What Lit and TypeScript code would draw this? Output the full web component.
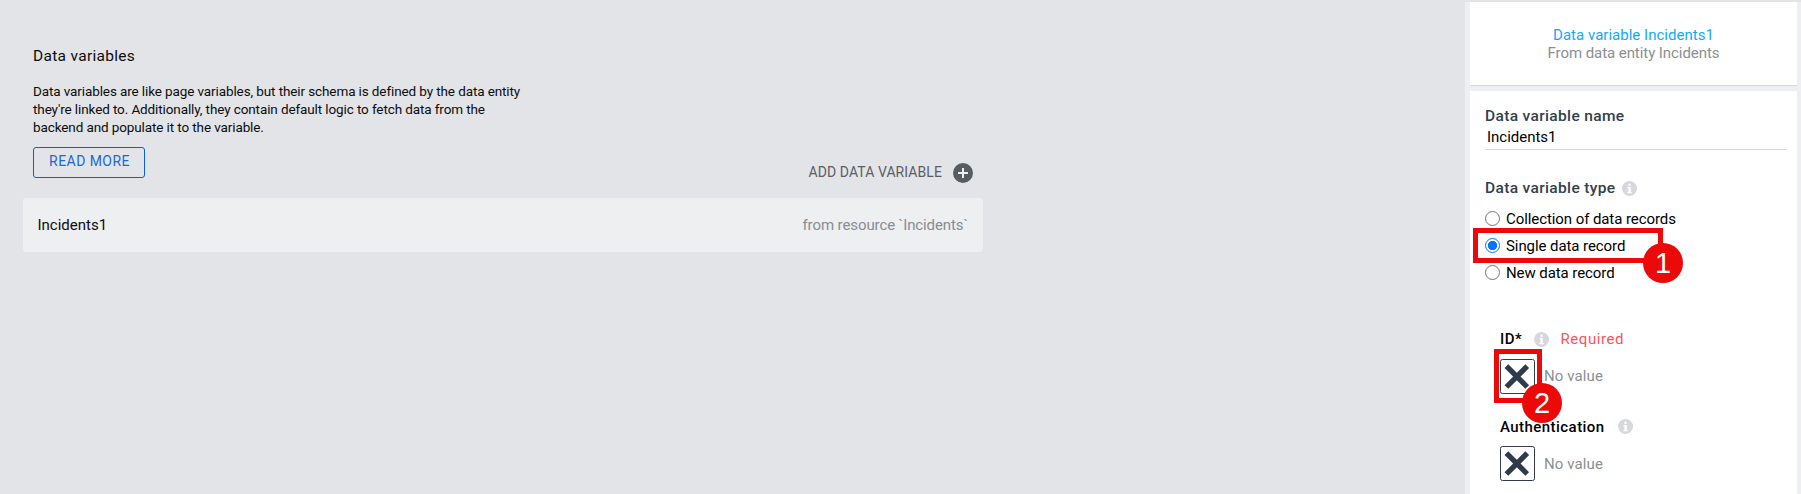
import { LitElement, html, css } from 'lit';
import { customElement, property } from 'lit/decorators.js';

@customElement('info-icon')
class InfoIcon extends LitElement {
  static styles = css`
    :host { display: block; width: 15px; height: 15px; }
    svg { display: block; }
  `;
  render() {
    return html`<svg width="15" height="15" viewBox="0 0 15 15">
      <circle cx="7.5" cy="7.5" r="7.5" fill="#d7d8dc" />
      <path d="M6.3 2.8h2.4v2H6.3zM5.5 6h3.3v5h.9v1.2H5.4V11h1V7.2h-.9z" fill="#fff" />
    </svg>`;
  }
}

@customElement('value-picker')
class ValuePicker extends LitElement {
  static styles = css`
    :host { display: flex; align-items: flex-start; gap: 9px; height: 35px; }
    .box { box-sizing: border-box; width: 35px; height: 35px; border: 1px solid #323c4b; border-radius: 2.5px; background: #fff; }
    svg { display: block; }
    .text { color: #8b8f94; font-size: 15px; line-height: 18px; letter-spacing: .1px; margin-top: var(--text-top, 9px); }
  `;
  render() {
    return html`<div class="box"><svg width="33" height="33" viewBox="0 0 33 33">
        <path d="M5.4 6.2L26.2 27M26.2 6.2L5.4 27" stroke="#2f3a4a" stroke-width="5.3" />
      </svg></div><span class="text">No value</span>`;
  }
}

@customElement('step-mark')
class StepMark extends LitElement {
  @property() step = '';
  static styles = css`
    :host { position: absolute; box-sizing: border-box; border: 5px solid #eb0909; pointer-events: none; z-index: 2; }
    .num {
      position: absolute; right: -25px; bottom: -25px; width: 40px; height: 40px; border-radius: 50%;
      background: #eb0909; color: #fff; text-align: center; font: 29px/41px "Liberation Sans", sans-serif;
    }
  `;
  render() {
    return html`<span class="num">${this.step}</span>`;
  }
}

@customElement('app-root')
class AppRoot extends LitElement {
  static styles = css`
    :host {
      display: flex; height: 494px; overflow: hidden; background: #e3e4e8; color: #0b0c0e;
      font: 15px/18px Roboto, "Liberation Sans", sans-serif;
    }
    .main { flex: 1; padding: 47px 0 0 23px; }
    .content { width: 960px; }
    .head { display: flex; justify-content: space-between; align-items: flex-end; padding: 0 10px; margin-bottom: 15px; }
    .title { font-size: 15.5px; letter-spacing: .3px; margin-bottom: 17px; }
    .desc { font-size: 13.5px; letter-spacing: -.11px; white-space: nowrap; margin-bottom: 11px; }
    .more {
      box-sizing: border-box; width: 112px; height: 31px; border: 1px solid #0a61cf; border-radius: 3px;
      padding: 4px 0 0 1px; text-align: center; color: #2267d0; font-size: 14px; letter-spacing: .45px; margin-bottom: 5px;
    }
    .add { display: flex; align-items: center; gap: 11px; color: #5a5e64; font-size: 14px; letter-spacing: .08px; }
    .add span { margin-bottom: 2px; }
    .add svg { display: block; }
    .row {
      display: flex; justify-content: space-between; align-items: center; height: 54px; box-sizing: border-box;
      padding: 0 15px 0 14.5px; border-radius: 3px; background: #eeeff1;
    }
    .row .from { color: #888c92; letter-spacing: -.1px; }
    .side { width: 336px; box-sizing: border-box; background: #eeeff2; border-top: 2px solid #e3e4e8; padding: 0 4px 0 5px; display: flex; flex-direction: column; gap: 5px; }
    .card { background: #fff; }
    .top { box-sizing: border-box; height: 84px; padding-top: 24px; border-bottom: 1px solid #d5d8da; text-align: center; color: #8b8e92; letter-spacing: -.06px; }
    .top .link { color: #14a9f5; letter-spacing: .02px; }
    .form { position: relative; flex: 1; padding: 16px 10px 0 15px; color: #000; }
    .label { display: flex; align-items: flex-start; font-weight: 500; font-size: 15.5px; letter-spacing: .35px; color: #32404c; }
    .label info-icon { margin-top: 2px; }
    .input { margin-top: 3px; padding: 0 0 3px 2px; border-bottom: 1px solid #d5d8da; letter-spacing: -.02px; }
    .type { margin-top: 29px; gap: 7px; }
    .radios { display: flex; flex-direction: column; gap: 9px; margin-top: 13px; }
    .opt { display: flex; gap: 6px; align-items: flex-start; letter-spacing: -.08px; }
    .dot { box-sizing: border-box; width: 15px; height: 15px; margin-top: 1px; border: 1px solid #767676; border-radius: 50%; }
    .dot.on { border: 1.5px solid #0075ff; background: radial-gradient(circle, #0075ff 4.3px, #fff 5px); }
    .params { margin: 48px 0 0 15px; }
    .dark { color: #000; font-size: 15px; letter-spacing: .45px; }
    .req { color: #f9545c; font-weight: 400; letter-spacing: .55px; margin-left: 12px; }
    .id info-icon { margin-left: 11.5px; margin-top: 1.5px; }
    .auth { margin-top: 24px; }
    .auth info-icon { margin-left: 13px; margin-top: .5px; }
    .v1 { margin-top: 11px; --text-top: 8px; }
    .v2 { margin-top: 10px; }
    .m1 { left: 3px; top: 137px; width: 190px; height: 35px; }
    .m2 { left: 24px; top: 258px; width: 48px; height: 54px; }
  `;
  render() {
    const options = ['Collection of data records', 'Single data record', 'New data record'];
    return html`
      <div class="main"><div class="content">
        <div class="head">
          <div>
            <div class="title">Data variables</div>
            <div class="desc">
              Data variables are like page variables, but their schema is defined by the data entity<br>
              they're linked to. Additionally, they contain default logic to fetch data from the<br>
              backend and populate it to the variable.
            </div>
            <div class="more">READ MORE</div>
          </div>
          <div class="add"><span>ADD DATA VARIABLE</span>
            <svg width="20" height="20" viewBox="0 0 20 20">
              <circle cx="10" cy="10" r="10" fill="#575c63" />
              <path d="M10 5v10M5 10h10" stroke="#eeeff1" stroke-width="2" />
            </svg>
          </div>
        </div>
        <div class="row"><span class="name">Incidents1</span><span class="from">from resource \`Incidents\`</span></div>
      </div></div>
      <div class="side">
        <div class="card top"><div class="link">Data variable Incidents1</div><div>From data entity Incidents</div></div>
        <div class="card form">
          <div class="label">Data variable name</div>
          <div class="input">Incidents1</div>
          <div class="label type">Data variable type<info-icon></info-icon></div>
          <div class="radios">
            ${options.map((o, i) => html`<div class="opt"><i class="dot ${i === 1 ? 'on' : ''}"></i>${o}</div>`)}
          </div>
          <div class="params">
            <div class="label dark id">ID*<info-icon></info-icon><span class="req">Required</span></div>
            <value-picker class="v1"></value-picker>
            <div class="label dark auth">Authentication<info-icon></info-icon></div>
            <value-picker class="v2"></value-picker>
          </div>
          <step-mark class="m1" step="1"></step-mark>
          <step-mark class="m2" step="2"></step-mark>
        </div>
      </div>`;
  }
}
